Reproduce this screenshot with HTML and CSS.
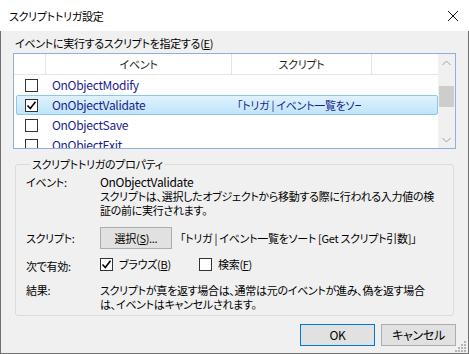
FILE: index.html
```html
<!DOCTYPE html>
<html>
<head>
  <meta charset="utf-8">
  <link rel="stylesheet" href="styles.css">
</head>
<body>
  <div class="window">
    <div class="titlebar">
      <span class="title">スクリプトトリガ設定</span>
      <svg class="close" width="12" height="12" viewBox="0 0 12 12">
        <path d="M1 1 L11 11 M11 1 L1 11" stroke="#111" stroke-width="1" fill="none"/>
      </svg>
    </div>

    <div class="content">
      <div class="list-label">イベントに実行するスクリプトを指定する(<u>E</u>)</div>

      <div class="listbox">
        <div class="list-main">
          <div class="list-head">
            <div class="col-check"></div>
            <div class="col-event">イベント</div>
            <div class="col-script">スクリプト</div>
            <div class="col-rest"></div>
          </div>
          <div class="row">
            <div class="col-check"><span class="check"></span></div>
            <div class="col-event">OnObjectModify</div>
            <div class="col-script"></div>
          </div>
          <div class="row selected">
            <div class="col-check"><span class="check on">
              <svg width="11" height="11" viewBox="0 0 11 11"><path d="M1.5 5.5 L4.3 8.5 L9.5 1.8" stroke="#000" stroke-width="1.6" fill="none"/></svg>
            </span></div>
            <div class="col-event">OnObjectValidate</div>
            <div class="col-script"><span class="cell-text">「トリガ | イベント一覧をソート [Get スクリプト引数]」</span></div>
          </div>
          <div class="row">
            <div class="col-check"><span class="check"></span></div>
            <div class="col-event">OnObjectSave</div>
            <div class="col-script"></div>
          </div>
          <div class="row">
            <div class="col-check"><span class="check"></span></div>
            <div class="col-event">OnObjectExit</div>
            <div class="col-script"></div>
          </div>
        </div>
        <div class="vscroll">
          <div class="arrow">
            <svg width="9" height="6" viewBox="0 0 9 6"><path d="M0.5 5 L4.5 1 L8.5 5" stroke="#a0a0a0" stroke-width="1" fill="none"/></svg>
          </div>
          <div class="track"><div class="thumb"></div></div>
          <div class="arrow">
            <svg width="9" height="6" viewBox="0 0 9 6"><path d="M0.5 1 L4.5 5 L8.5 1" stroke="#a0a0a0" stroke-width="1" fill="none"/></svg>
          </div>
        </div>
      </div>

      <fieldset class="props">
        <legend>スクリプトトリガのプロパティ</legend>
        <div class="prop-grid">
          <div class="prop-label">イベント:</div>
          <div class="prop-value"><span class="latin">OnObjectValidate</span><br>スクリプトは、選択したオブジェクトから移動する際に行われる入力値の検<br>証の前に実行されます。</div>

          <div class="prop-label mid">スクリプト:</div>
          <div class="prop-value script-row">
            <button class="btn">選択(<u>S</u>)...</button>
            <span>「トリガ | イベント一覧をソート [Get スクリプト引数]」</span>
          </div>

          <div class="prop-label">次で有効:</div>
          <div class="prop-value opts">
            <label class="opt"><span class="check on">
              <svg width="11" height="11" viewBox="0 0 11 11"><path d="M1.5 5.5 L4.3 8.5 L9.5 1.8" stroke="#000" stroke-width="1.6" fill="none"/></svg>
            </span><span>ブラウズ(<u>B</u>)</span></label>
            <label class="opt"><span class="check"></span><span>検索(<u>F</u>)</span></label>
          </div>

          <div class="prop-label">結果:</div>
          <div class="prop-value">スクリプトが真を返す場合は、通常は元のイベントが進み、偽を返す場合<br>は、イベントはキャンセルされます。</div>
        </div>
      </fieldset>

      <div class="buttons">
        <button class="btn dlg default">OK</button>
        <button class="btn dlg">キャンセル</button>
      </div>

      <svg class="grip" width="12" height="12" viewBox="0 0 12 12">
        <g fill="#b4b4b4">
          <rect x="9" y="1" width="2" height="2"/>
          <rect x="6" y="4" width="2" height="2"/><rect x="9" y="4" width="2" height="2"/>
          <rect x="3" y="7" width="2" height="2"/><rect x="6" y="7" width="2" height="2"/><rect x="9" y="7" width="2" height="2"/>
          <rect x="0" y="10" width="2" height="2"/><rect x="3" y="10" width="2" height="2"/><rect x="6" y="10" width="2" height="2"/><rect x="9" y="10" width="2" height="2"/>
        </g>
      </svg>
    </div>
  </div>
</body>
</html>
```

FILE: styles.css
```css
* {
  box-sizing: border-box;
  margin: 0;
  padding: 0;
}
body {
  width: 469px;
  height: 354px;
  overflow: hidden;
  font-family: "Noto Sans CJK JP", sans-serif;
  font-size: 11px;
  line-height: 14px;
  letter-spacing: -0.3px;
  font-feature-settings: "palt";
  color: #000;
  background: #fff;
}
u {
  text-underline-offset: 1px;
}
.latin {
  font-size: 12px;
  letter-spacing: -0.3px;
}

.window {
  width: 469px;
  height: 354px;
  display: flex;
  flex-direction: column;
}
.titlebar {
  height: 31px;
  background: #fff;
  display: flex;
  align-items: center;
  justify-content: space-between;
  padding: 0 10px 0 9px;
}

.content {
  position: relative;
  flex: 1;
  background: #f0f0f0;
  border: 1px solid #707070;
  border-top: none;
  padding: 5px 12px 0 12px;
  display: flex;
  flex-direction: column;
}
.list-label {
  height: 17px;
  padding-left: 2px;
}

/* list */
.listbox {
  height: 96px;
  border: 1px solid #8fb0da;
  background: #fff;
  display: flex;
  overflow: hidden;
}
.list-main {
  flex: 1;
  overflow: hidden;
}
.list-head {
  display: flex;
  height: 21px;
  border-bottom: 1px solid #e5e5e5;
  color: #222;
}
.list-head > div {
  display: flex;
  align-items: center;
  justify-content: center;
  border-right: 1px solid #e5e5e5;
}
.list-head .col-rest {
  border-right: none;
  flex: 1;
}
.col-check {
  width: 32px;
  flex: none;
}
.col-event {
  width: 186px;
  flex: none;
}
.col-script {
  width: 140px;
  flex: none;
  white-space: nowrap;
  overflow: hidden;
}
.row {
  display: flex;
  align-items: center;
  height: 20px;
  color: #1c1c8e;
  border: 1px solid transparent;
  margin-left: 2px;
}
.row .col-check {
  width: 30px;
  padding-left: 8px;
  display: flex;
  align-items: center;
}
.row .col-event {
  padding-left: 5px;
  font-size: 12px;
  letter-spacing: -0.3px;
}
.row .col-script {
  padding-left: 4px;
}
.cell-text {
  display: block;
  width: 124px;
  overflow: hidden;
}
.row.selected {
  background: linear-gradient(#dff2fd, #bfe5f9);
  border-color: #8cc8ea;
  border-radius: 2px;
}

.check {
  width: 13px;
  height: 13px;
  border: 1px solid #333;
  background: #fff;
  display: inline-flex;
  align-items: center;
  justify-content: center;
  flex: none;
}

.vscroll {
  width: 17px;
  flex: none;
  background: #f0f0f0;
  display: flex;
  flex-direction: column;
}
.arrow {
  height: 17px;
  display: flex;
  align-items: center;
  justify-content: center;
}
.track {
  flex: 1;
  padding-top: 15px;
}
.thumb {
  height: 21px;
  margin: 0 1px;
  background: #cdcdcd;
}

/* properties group */
.props {
  margin: 8px 2px 0 2px;
  border: 1px solid #dcdcdc;
  border-radius: 3px;
  padding: 4px 10px 5px 10px;
  height: 159px;
}
.props legend {
  padding: 0 2px;
  margin-left: 4px;
  line-height: 14px;
}
.prop-grid {
  display: grid;
  grid-template-columns: 74px 1fr;
  row-gap: 10px;
}
.prop-value {
  white-space: nowrap;
}
.prop-grid .mid {
  align-self: center;
}
.script-row {
  display: flex;
  align-items: center;
  gap: 8px;
}
.opts {
  display: flex;
  margin-top: -3px;
  margin-bottom: 1px;
}
.opt {
  display: flex;
  align-items: center;
  gap: 6px;
  width: 99px;
}

.btn {
  font-family: "Noto Sans CJK JP", sans-serif;
  font-size: 11px;
  line-height: 14px;
  letter-spacing: -0.3px;
  font-feature-settings: "palt";
  height: 22px;
  width: 72px;
  background: #e1e1e1;
  border: 1px solid #adadad;
  color: #000;
}
.buttons {
  margin-top: 8px;
  display: flex;
  justify-content: flex-end;
  gap: 6px;
}
.btn.dlg {
  width: 75px;
  font-size: 12px;
}
.btn.default {
  border-color: #0078d7;
}

.grip {
  position: absolute;
  right: 1px;
  bottom: 1px;
}
```
